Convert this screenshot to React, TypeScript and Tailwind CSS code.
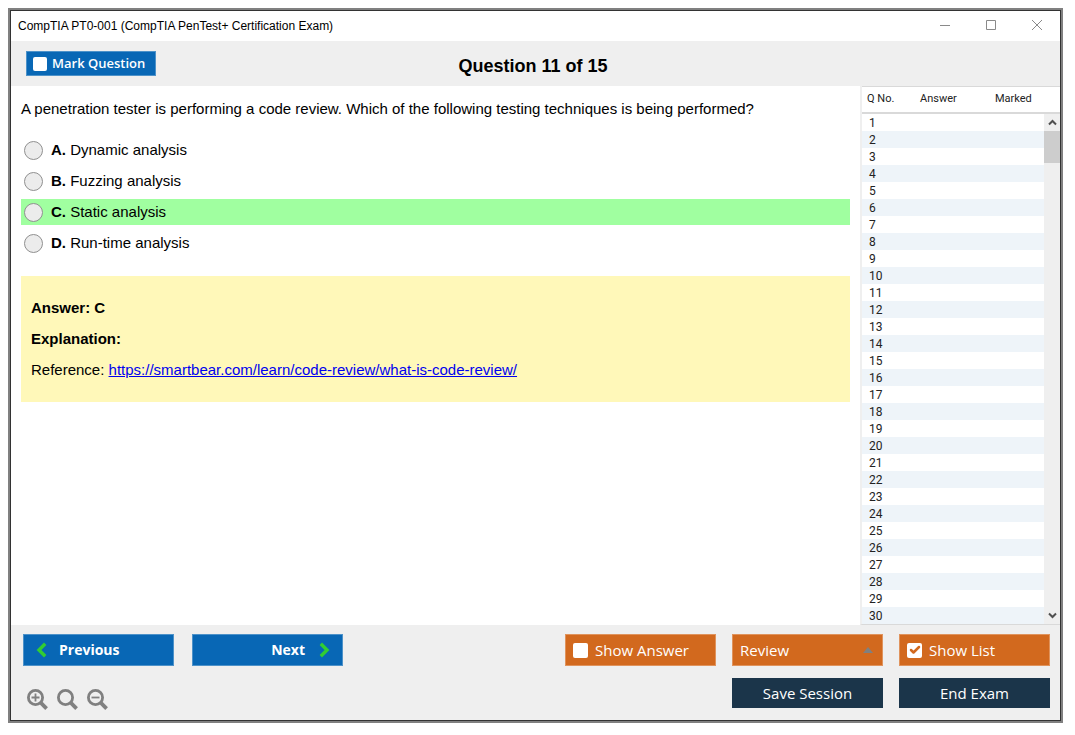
import { ReactNode, useState } from "react";
import { Check } from "lucide-react";

const options = [
  { letter: "A", text: "Dynamic analysis" },
  { letter: "B", text: "Fuzzing analysis" },
  { letter: "C", text: "Static analysis", correct: true },
  { letter: "D", text: "Run-time analysis" },
];

const questionNumbers = Array.from({ length: 30 }, (_, i) => i + 1);

const TitleBar = () => (
  <div className="flex h-[30px] items-center justify-between bg-white pr-[17px] pl-[7px]">
    <span className="text-xs text-black">CompTIA PT0-001 (CompTIA PenTest+ Certification Exam)</span>
    <div className="flex items-center gap-[34px] text-[#8a8a8a]">
      <button aria-label="Minimize">
        <svg width="12" height="12" viewBox="0 0 12 12" stroke="currentColor" fill="none">
          <path d="M1 5.5h10" />
        </svg>
      </button>
      <button aria-label="Maximize">
        <svg width="12" height="12" viewBox="0 0 12 12" stroke="currentColor" fill="none">
          <path d="M1.5 .5h9v9h-9z" />
        </svg>
      </button>
      <button aria-label="Close">
        <svg width="12" height="12" viewBox="0 0 12 12" stroke="currentColor" fill="none">
          <path d="M1 0l10 10M11 0L1 10" />
        </svg>
      </button>
    </div>
  </div>
);

type CheckButtonProps = {
  label: string;
  className: string;
  boxClassName: string;
  defaultChecked?: boolean;
};

const CheckButton = ({ label, className, boxClassName, defaultChecked = false }: CheckButtonProps) => {
  const [checked, setChecked] = useState(defaultChecked);

  return (
    <label className={`flex items-center border ${className}`}>
      <span className={`grid shrink-0 ${boxClassName}`}>
        <input
          type="checkbox"
          checked={checked}
          onChange={(e) => setChecked(e.target.checked)}
          className="col-start-1 row-start-1 size-full appearance-none rounded-xs bg-white"
        />
        {checked && (
          <Check
            className="pointer-events-none col-start-1 row-start-1 size-3 place-self-center text-[#d2691e]"
            strokeWidth={5}
          />
        )}
      </span>
      {label}
    </label>
  );
};

const Magnifier = ({ label, children }: { label: string; children?: ReactNode }) => (
  <button aria-label={label} className="text-[#808080]">
    <svg width="21" height="21" viewBox="0 0 21 21" fill="none" stroke="currentColor">
      <circle cx="8.5" cy="8.5" r="7.1" strokeWidth="2.8" />
      <path d="M13.4 13.4l6.2 6.2" strokeWidth="3.8" />
      {children}
    </svg>
  </button>
);

const QuestionPanel = () => (
  <main className="min-w-0 flex-1 px-[10px] pt-[10px] text-[15px] text-black">
    <p className="leading-[26px]">
      A penetration tester is performing a code review. Which of the following testing techniques is being performed?
    </p>
    <div className="mt-[15px] flex flex-col gap-[5px]">
      {options.map((option) => (
        <label
          key={option.letter}
          className={`flex h-[26px] items-center px-[3px] ${option.correct ? "bg-[#a0ffa0]" : ""}`}
        >
          <input
            type="radio"
            name="answer"
            className="mr-2 size-[19px] shrink-0 appearance-none rounded-full border border-[#909090] bg-[#ececec] checked:bg-[#909090]"
          />
          <span>
            <b>{option.letter}.</b> {option.text}
          </span>
        </label>
      ))}
    </div>
    <div className="mt-5 bg-[#fff8b9] px-[10px] pt-4 pb-[17px] leading-[31px]">
      <p className="font-bold">Answer: C</p>
      <p className="font-bold">Explanation:</p>
      <p>
        Reference:{" "}
        <a href="https://smartbear.com/learn/code-review/what-is-code-review/" className="text-[#0000ee] underline">
          https://smartbear.com/learn/code-review/what-is-code-review/
        </a>
      </p>
    </div>
  </main>
);

const QuestionList = () => (
  <aside className="flex w-[200px] shrink-0 border-b border-l-2 border-[#d9d9d9] border-l-[#efefef] font-['Roboto',sans-serif] text-[#222]">
    <table className="flex-1 table-fixed border-separate border-spacing-0 text-xs">
      <thead>
        <tr className="text-left text-[11px]">
          <th className="h-7 w-[54px] border-t border-b-2 border-[#d9d9d9] pl-[5px] font-normal">Q No.</th>
          <th className="h-7 w-[74px] border-t border-b-2 border-[#d9d9d9] pl-1 font-normal">Answer</th>
          <th className="h-7 border-t border-b-2 border-[#d9d9d9] pl-[5px] font-normal">Marked</th>
        </tr>
      </thead>
      <tbody>
        {questionNumbers.map((n) => (
          <tr key={n} className="h-[17px] leading-4 even:bg-[#eef4f9]">
            <td className="pt-px pl-[7px]">{n}</td>
            <td />
            <td />
          </tr>
        ))}
      </tbody>
    </table>
    <div className="flex w-4 flex-col">
      <div className="h-7 border-t border-b-2 border-[#d9d9d9]" />
      <div className="flex flex-1 flex-col items-center bg-[#efefef] text-[#505050]">
        <button aria-label="Scroll up" className="flex h-[17px] items-center">
          <svg width="9" height="7" viewBox="0 0 9 7" fill="none" stroke="currentColor" strokeWidth="2">
            <path d="M1 5.5l3.5-3.5L8 5.5" />
          </svg>
        </button>
        <div className="h-8 w-full bg-[#cdcdcd]" />
        <button aria-label="Scroll down" className="mt-auto flex h-[17px] items-center">
          <svg width="9" height="7" viewBox="0 0 9 7" fill="none" stroke="currentColor" strokeWidth="2">
            <path d="M1 1.5L4.5 5 8 1.5" />
          </svg>
        </button>
      </div>
    </div>
  </aside>
);

const Footer = () => (
  <footer className="flex justify-between bg-[#efefef] pt-[9px] pr-[10px] pb-[10px] pl-3 font-['Open_Sans',sans-serif] text-white">
    <div className="flex flex-col gap-[23px]">
      <div className="flex gap-[18px] text-sm font-bold">
        <button className="flex h-8 w-[151px] items-center gap-3 border border-[#4d92c9] bg-[#0867b5] px-3">
          <svg width="11" height="16" viewBox="0 0 11 16" fill="none" stroke="#32cd32" strokeWidth="3.4">
            <path d="M9.2 1.8L3 8l6.2 6.2" />
          </svg>
          Previous
        </button>
        <button className="flex h-8 w-[151px] items-center justify-end gap-[14px] border border-[#4d92c9] bg-[#0867b5] px-3">
          Next
          <svg width="11" height="16" viewBox="0 0 11 16" fill="none" stroke="#32cd32" strokeWidth="3.4">
            <path d="M1.8 1.8L8 8l-6.2 6.2" />
          </svg>
        </button>
      </div>
      <div className="flex gap-[9px] pl-1">
        <Magnifier label="Zoom in">
          <path d="M4.5 8.5h8M8.5 4.5v8" strokeWidth="1.8" />
        </Magnifier>
        <Magnifier label="Reset zoom" />
        <Magnifier label="Zoom out">
          <path d="M4.5 8.5h8" strokeWidth="1.8" />
        </Magnifier>
      </div>
    </div>
    <div className="grid grid-cols-[151px_151px_151px] content-start gap-x-4 gap-y-3 text-[15px]">
      <CheckButton
        label="Show Answer"
        className="h-8 gap-[7px] border-[#e0935c] bg-[#d2691e] px-[7px]"
        boxClassName="size-[15px]"
      />
      <div className="relative">
        <select
          aria-label="Review"
          className="h-8 w-full appearance-none border border-[#e0935c] bg-[#d2691e] px-[7px]"
        >
          <option>Review</option>
        </select>
        <svg className="pointer-events-none absolute top-[13px] right-[10px]" width="10" height="6" viewBox="0 0 10 6">
          <path d="M0 6l5-6 5 6z" fill="#808080" />
        </svg>
      </div>
      <CheckButton
        label="Show List"
        className="h-8 gap-[7px] border-[#e0935c] bg-[#d2691e] px-[7px]"
        boxClassName="size-[15px]"
        defaultChecked
      />
      <button className="col-start-2 h-[30px] bg-[#1b354a]">Save Session</button>
      <button className="h-[30px] bg-[#1b354a]">End Exam</button>
    </div>
  </footer>
);

const App = () => (
  <div className="flex min-h-screen bg-white pt-2 pr-3 pb-3 pl-2 font-['Liberation_Sans',Arial,sans-serif]">
    <div className="flex min-w-0 flex-1 border-2 border-[#808080]">
      <div className="flex min-w-0 flex-1 flex-col border border-[#333]">
        <TitleBar />
        <header className="grid h-[45px] grid-cols-[1fr_auto_1fr] items-center bg-[#efefef] pr-5 pl-[15px]">
          <CheckButton
            label="Mark Question"
            className="h-[25px] w-[130px] gap-[5px] border-[#4d92c9] bg-[#0867b5] px-[6px] font-['Open_Sans',sans-serif] text-[13px] font-semibold whitespace-nowrap text-white"
            boxClassName="size-[14px]"
          />
          <h1 className="pt-1 text-lg font-bold text-black">Question 11 of 15</h1>
        </header>
        <div className="flex flex-1 bg-white">
          <QuestionPanel />
          <QuestionList />
        </div>
        <Footer />
      </div>
    </div>
  </div>
);

export default App;
